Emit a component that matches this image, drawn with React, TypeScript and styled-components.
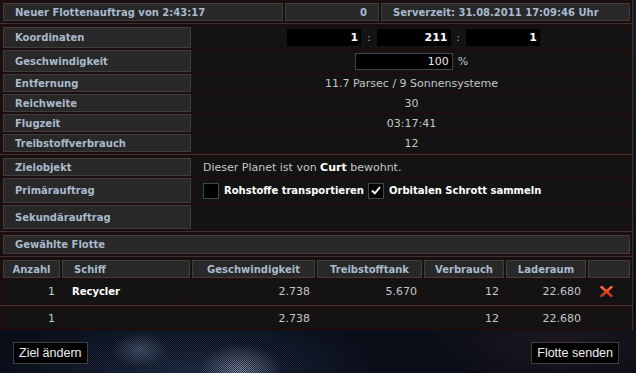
import React from 'react';
import styled, { createGlobalStyle } from 'styled-components';

const GlobalStyle = createGlobalStyle`
  html, body {
    margin: 0;
    padding: 0;
  }
  body {
    width: 636px;
    height: 373px;
    overflow: hidden;
    font-family: 'DejaVu Sans', Verdana, sans-serif;
    font-size: 11px;
    background-color: #0b0d15;
    background-image:
      repeating-conic-gradient(rgba(0, 0, 0, 0.6) 0 25%, transparent 0 50%),
      radial-gradient(ellipse 60px 40px at 240px 372px, rgba(190, 205, 235, 0.6), transparent 70%),
      radial-gradient(ellipse 40px 25px at 140px 350px, rgba(150, 170, 210, 0.45), transparent 70%),
      radial-gradient(ellipse 260px 80px at 190px 370px, rgba(60, 85, 130, 0.55), transparent 75%),
      radial-gradient(ellipse 180px 60px at 560px 345px, rgba(60, 40, 45, 0.6), transparent 75%),
      linear-gradient(180deg, #1a2640 0%, #111a2c 60%, #0d1322 100%);
    background-size: 2px 2px, auto, auto, auto, auto, auto;
  }
`;

const Page = styled.div`
  width: 633px;
`;

const Panel = styled.div`
  background: #1e0d0d;
  border-right: 1px solid #3a3434;
  box-sizing: border-box;
`;

const Section = styled.div<{ $cols: string; $rows: string; $first?: boolean }>`
  display: grid;
  grid-template-columns: ${(p) => p.$cols};
  grid-template-rows: ${(p) => p.$rows};
  gap: 2px;
  padding: 3px 3px 2px;
  border-top: ${(p) => (p.$first ? 'none' : '1px solid #3a3434')};
`;

const Th = styled.div<{ $align?: 'left' | 'center' | 'right' }>`
  box-sizing: border-box;
  background: #282828;
  border: 1px solid #3e3e3e;
  color: #aabacd;
  font-weight: bold;
  font-size: 10px;
  display: flex;
  align-items: center;
  justify-content: ${(p) =>
    p.$align === 'center' ? 'center' : p.$align === 'right' ? 'flex-end' : 'flex-start'};
  padding: 0 11px;
  white-space: nowrap;
  overflow: hidden;
`;

const Td = styled.div<{ $align?: 'left' | 'center' | 'right' }>`
  box-sizing: border-box;
  background: #131313;
  color: #c6c6c6;
  font-size: 11px;
  display: flex;
  align-items: center;
  justify-content: ${(p) =>
    p.$align === 'left' ? 'flex-start' : p.$align === 'right' ? 'flex-end' : 'center'};
  padding: ${(p) => (p.$align === 'left' ? '0 10px' : p.$align === 'right' ? '0 5px' : '0')};
  white-space: nowrap;
`;

const CoordGroup = styled.div`
  display: flex;
  align-items: center;
  gap: 6px;
  margin-left: 4px;
`;

const CoordBox = styled.div`
  width: 74px;
  height: 17px;
  background: #000;
  color: #fff;
  font-weight: bold;
  font-size: 11px;
  display: flex;
  align-items: center;
  justify-content: flex-end;
  padding-right: 3px;
  box-sizing: border-box;
`;

const Colon = styled.span`
  color: #b8b8b8;
  font-size: 10px;
`;

const SpeedBox = styled.div`
  width: 98px;
  height: 17px;
  background: #000;
  border: 1px solid #454545;
  color: #e6e6e6;
  font-size: 11px;
  display: flex;
  align-items: center;
  justify-content: flex-end;
  padding-right: 3px;
  box-sizing: border-box;
  margin-right: 5px;
`;

const Strong = styled.b<{ $small?: boolean }>`
  color: #fff;
  font-size: ${(p) => (p.$small ? '10px' : 'inherit')};
`;

const Check = styled.span`
  width: 16px;
  height: 16px;
  box-sizing: border-box;
  background: #000;
  border: 1px solid #464646;
  display: inline-flex;
  align-items: center;
  justify-content: center;
  margin-right: 5px;
`;

const CheckLabel = styled.span`
  color: #fff;
  font-weight: bold;
  font-size: 10px;
  margin-right: 4px;
`;

const Footer = styled.div`
  display: flex;
  justify-content: space-between;
  padding: 12px 14px 0 13px;
`;

const Button = styled.button`
  height: 22px;
  background: #000;
  border: 1px solid #3f3f3f;
  color: #f0f0f0;
  font-family: 'Liberation Sans', Arial, sans-serif;
  font-size: 12.5px;
  padding: 0 5px;
  cursor: pointer;
`;

const CrossIcon = () => (
  <svg width="13" height="11" viewBox="0 0 13 11" style={{ marginLeft: -6 }}>
    <defs>
      <linearGradient id="xg" x1="0" y1="0" x2="0" y2="1">
        <stop offset="0" stopColor="#ff6a3a" />
        <stop offset="1" stopColor="#c2300e" />
      </linearGradient>
    </defs>
    <path d="M1.5 1 L11.5 10 M11.5 1 L1.5 10" stroke="url(#xg)" strokeWidth="2.6" strokeLinecap="round" />
  </svg>
);

const CheckMark = () => (
  <svg width="10" height="9" viewBox="0 0 10 9">
    <path d="M1 4.5 L3.8 7.4 L9 1.2" stroke="#fff" strokeWidth="1.9" fill="none" />
  </svg>
);

const fleetCols = '57px 128px 123px 105px 80px 80px 42px';

export default function App() {
  return (
    <>
      <GlobalStyle />
      <Page>
        <Panel>
          <Section $first $cols="280px 94px 249px" $rows="18px">
            <Th>Neuer Flottenauftrag von 2:43:17</Th>
            <Th $align="right">0</Th>
            <Th>Serverzeit: 31.08.2011 17:09:46 Uhr</Th>
          </Section>

          <Section $cols="188px 437px" $rows="21px 22px 18px 18px 18px 18px">
            <Th>Koordinaten</Th>
            <Td>
              <CoordGroup>
                <CoordBox>1</CoordBox>
                <Colon>:</Colon>
                <CoordBox>211</CoordBox>
                <Colon>:</Colon>
                <CoordBox>1</CoordBox>
              </CoordGroup>
            </Td>
            <Th>Geschwindigkeit</Th>
            <Td>
              <SpeedBox>100</SpeedBox>%
            </Td>
            <Th>Entfernung</Th>
            <Td>11.7 Parsec / 9 Sonnensysteme</Td>
            <Th>Reichweite</Th>
            <Td>30</Td>
            <Th>Flugzeit</Th>
            <Td>03:17:41</Td>
            <Th>Treibstoffverbrauch</Th>
            <Td>12</Td>
          </Section>

          <Section $cols="188px 437px" $rows="18px 25px 24px">
            <Th>Zielobjekt</Th>
            <Td $align="left">
              Dieser Planet ist von&nbsp;<Strong>Curt</Strong>&nbsp;bewohnt.
            </Td>
            <Th>Primärauftrag</Th>
            <Td $align="left">
              <Check />
              <CheckLabel>Rohstoffe transportieren</CheckLabel>
              <Check>
                <CheckMark />
              </Check>
              <CheckLabel>Orbitalen Schrott sammeln</CheckLabel>
            </Td>
            <Th>Sekundärauftrag</Th>
            <Td />
          </Section>

          <Section $cols="627px" $rows="19px">
            <Th>Gewählte Flotte</Th>
          </Section>

          <Section $cols={fleetCols} $rows="18px 23px">
            <Th $align="center">Anzahl</Th>
            <Th>Schiff</Th>
            <Th $align="center">Geschwindigkeit</Th>
            <Th $align="center">Treibstofftank</Th>
            <Th $align="center">Verbrauch</Th>
            <Th $align="center">Laderaum</Th>
            <Th />
            <Td $align="right">1</Td>
            <Td $align="left">
              <Strong $small>Recycler</Strong>
            </Td>
            <Td $align="right">2.738</Td>
            <Td $align="right">5.670</Td>
            <Td $align="right">12</Td>
            <Td $align="right">22.680</Td>
            <Td>
              <CrossIcon />
            </Td>
          </Section>

          <Section $cols={fleetCols} $rows="19px">
            <Td $align="right">1</Td>
            <Td />
            <Td $align="right">2.738</Td>
            <Td />
            <Td $align="right">12</Td>
            <Td $align="right">22.680</Td>
            <Td />
          </Section>
        </Panel>
        <Footer>
          <Button>Ziel ändern</Button>
          <Button>Flotte senden</Button>
        </Footer>
      </Page>
    </>
  );
}
